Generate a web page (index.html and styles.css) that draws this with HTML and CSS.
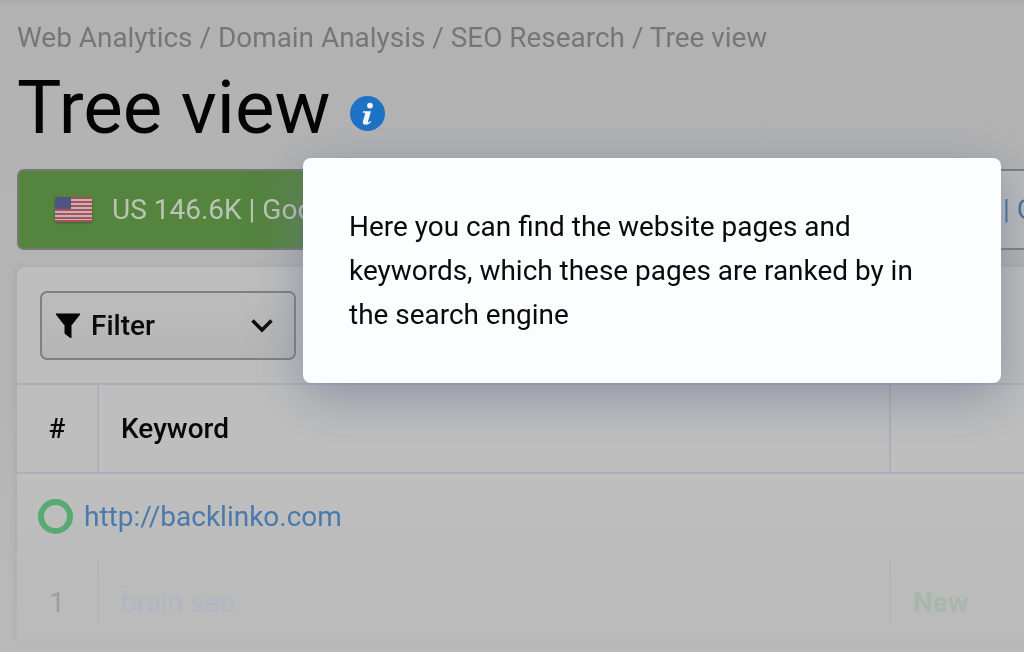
FILE: index.html
```html
<!DOCTYPE html>
<html lang="en">
<head>
<meta charset="utf-8">
<title>Tree view</title>
<link rel="stylesheet" href="styles.css">
</head>
<body>
<div class="page">
  <nav class="crumbs">Web Analytics / Domain Analysis / SEO Research / Tree view</nav>
  <h1 class="title">Tree view
    <svg class="info" viewBox="0 0 35 35" width="35" height="35"><circle cx="17.5" cy="17.5" r="17.5" fill="#1f72c4"/><circle cx="20" cy="9.6" r="2.9" fill="#f4f6fa"/><path d="M13 15.2h8l-3 10.2c-.2.8.5 1 1.300.5l1.400-1 .6.9c-1.800 1.900-3.500 3-5.800 3-2.200 0-3.200-1.200-2.600-3.200l2.200-7.900c.2-.8-.2-1-.8-1h-1.600z" fill="#f4f6fa"/></svg>
  </h1>
  <div class="stats">
    <div class="stat stat-main">
      <svg class="flag" viewBox="0 0 37 25" width="37" height="25">
        <rect width="37" height="25" fill="#c4b4b8"/>
        <g fill="#a8505c"><rect y="0" width="37" height="2"/><rect y="4" width="37" height="2"/><rect y="8" width="37" height="2"/><rect y="12" width="37" height="2"/><rect y="16" width="37" height="2"/><rect y="20" width="37" height="2"/><rect y="23" width="37" height="2"/></g>
        <rect width="16" height="12" fill="#4f5583"/>
      </svg>
      <span>US 146.6K | Google</span>
    </div>
    <div class="stat stat-other"><span>| G</span></div>
  </div>
  <section class="card">
    <div class="toolbar">
      <button class="filter">
        <svg class="funnel" viewBox="0 0 26 25" width="26" height="25"><path d="M1 1h24L16 12.500V25l-6-4.500V12.500z" fill="#050505" stroke="#050505" stroke-linejoin="round"/></svg>
        <span class="filter-label">Filter</span>
        <svg class="chev" viewBox="0 0 24 15" width="24" height="15"><path d="M2.500 2.500 12 12l9.500-9.500" fill="none" stroke="#0a0a0a" stroke-width="3.500"/></svg>
      </button>
    </div>
    <div class="row head">
      <div class="c-num">#</div>
      <div class="c-key">Keyword</div>
      <div class="c-end"></div>
    </div>
    <div class="site"><span class="ring"></span><a class="link">http://backlinko.com</a></div>
    <div class="row item">
      <div class="c-num">1</div>
      <div class="c-key">brain seo</div>
      <div class="c-end">New</div>
    </div>
  </section>
  <div class="tip">Here you can find the website pages and keywords, which these pages are ranked by in the search engine</div>
</div>
</body>
</html>
```
FILE: styles.css
```css
* { box-sizing: border-box; }
html, body { margin: 0; height: 100%; }
body { background: #b7b7b7; font-family: Roboto, "Liberation Sans", sans-serif; overflow: hidden; }
.page {
  position: relative;
  width: 1024px;
  height: 652px;
  padding: 21px 0 0 17px;
  overflow: hidden;
  background: linear-gradient(#a9a9a9 0, #b2b2b2 6px, #b3b3b3 150px, #b5b5b5 400px, #bababa 620px);
  filter: blur(.45px);
}
.crumbs { font-size: 27.93px; line-height: 32px; color: #767676; white-space: nowrap; padding-top: 1px; height: 32px; }
.title {
  display: flex;
  align-items: center;
  gap: 20px;
  margin: 11px 0 0;
  font-size: 74.5px;
  line-height: 87px;
  font-weight: 400;
  color: #040404;
  height: 87px;
}
.info { flex: none; margin-top: 12px; }
.stats { display: flex; gap: 17px; margin-top: 18px; height: 81px; }
.stat { border: 2px solid #777; border-radius: 7px; font-size: 28px; display: flex; align-items: center; white-space: nowrap; overflow: hidden; }
.stat-main { width: 400px; flex: none; background: #55843f; color: #bcc4b6; padding-left: 36px; gap: 20px; }
.flag { flex: none; filter: drop-shadow(0 1px 1px rgba(40, 50, 30, .45)); }
.stat-other { flex: 1; margin-right: -20px; background: #bcbcbc; border-color: #7d7d7d; color: #41709f; justify-content: flex-end; padding-right: 20px; }
.stat-other span { margin-right: -10px; width: 29px; overflow: hidden; }
.card {
  margin: 17px 0 0;
  width: 1040px;
  height: 374px;
  border-radius: 8px 0 0 0;
  background: linear-gradient(#bebebe 0, #bebebe 220px, #bbbbbb 300px, #bababa 374px);
  box-shadow: -3px 0 6px rgba(120, 120, 120, .14);
}
.toolbar { height: 118px; padding: 24px 0 0 23px; border-bottom: 2px solid #abafbc; }
.filter {
  display: flex;
  align-items: center;
  width: 256px;
  height: 69px;
  padding: 0 20px 0 13px;
  border: 2px solid #7f7f7f;
  border-radius: 7px;
  background: linear-gradient(#bcbcbc, #b5b5b5);
  font: 500 28px Roboto, sans-serif;
  color: #0a0a0a;
}
.funnel { flex: none; }
.filter-label { margin-left: 10px; flex: 1; text-align: left; }
.row { display: flex; font-size: 28px; }
.head { height: 89px; border-bottom: 2px solid #abafbc; font-weight: 500; color: #080808; }
.c-num { width: 82px; flex: none; display: flex; align-items: center; justify-content: center; border-right: 2px solid #abafbc; }
.c-key { width: 792px; flex: none; padding-left: 22px; display: flex; align-items: center; border-right: 2px solid #abafbc; }
.c-end { flex: 1; display: flex; align-items: center; padding-left: 22px; }
.site { height: 85px; display: flex; align-items: center; padding-left: 21px; gap: 11px; font-size: 28px; }
.ring { width: 35px; height: 35px; border: 6px solid #58aa73; border-radius: 50%; flex: none; }
.link { color: #4a79ac; }
.item { height: 65px; color: #9d9d9d; }
.item .c-num, .item .c-key, .item .c-end { padding-top: 21px; }
.item .c-num { border-right-color: #b3b4b7; }
.item .c-key { border-right-color: #b3b4b7; color: #aeb6c4; }
.item .c-end { color: #a8b6ac; font-weight: 700; }
.tip {
  position: absolute;
  left: 303px;
  top: 158px;
  width: 698px;
  height: 225px;
  padding: 47px 46px 0;
  border-radius: 8px;
  background: #fcfdff;
  color: #0a0a0a;
  font-size: 27.95px;
  line-height: 44px;
  box-shadow: 0 12px 50px rgba(105, 115, 145, .6);
}
```
